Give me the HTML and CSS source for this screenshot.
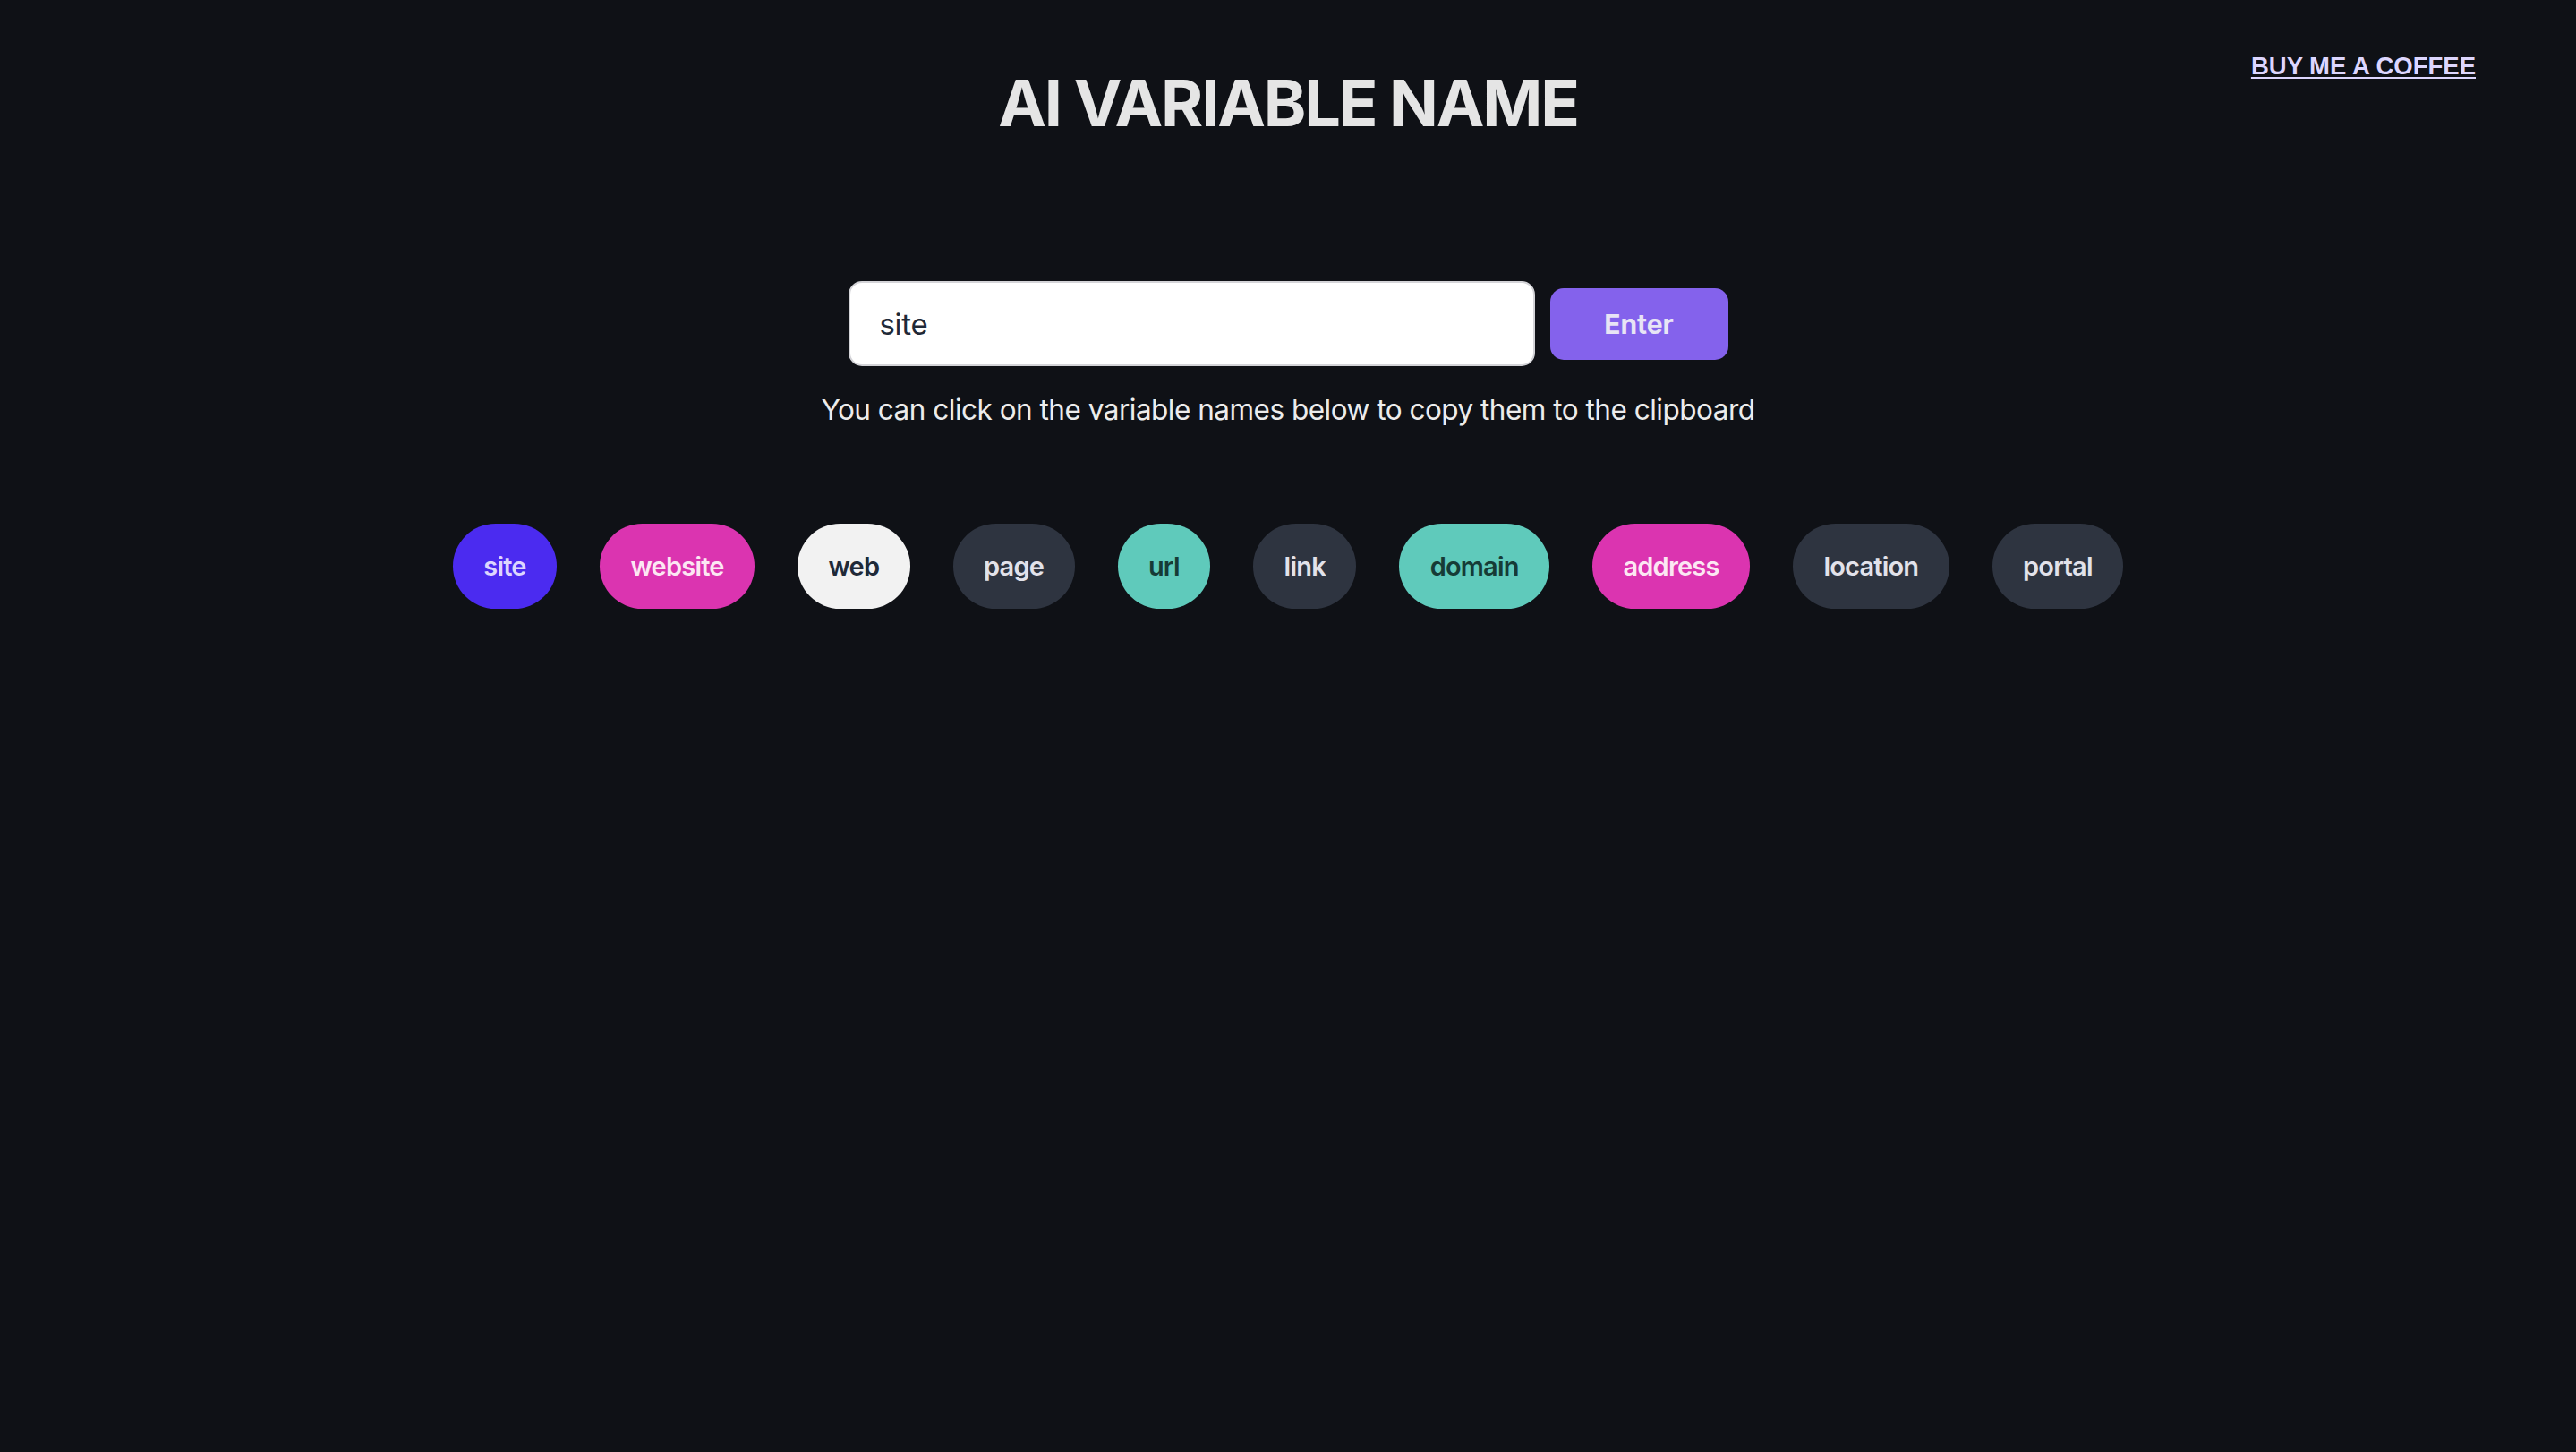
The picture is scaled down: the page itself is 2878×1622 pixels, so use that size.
FILE: index.html
```html
<!DOCTYPE html>
<html lang="en">
<head>
<meta charset="utf-8">
<title>AI Variable Name</title>
<link rel="stylesheet" href="styles.css">
</head>
<body>
<header class="header">
  <div class="header-side"></div>
  <h1 class="title">AI VARIABLE NAME</h1>
  <div class="header-side header-right">
    <a class="coffee-link" href="#">BUY ME A COFFEE</a>
  </div>
</header>
<main class="main">
  <form class="search" onsubmit="return false;">
    <input class="search-input" type="text" value="site">
    <button class="search-btn" type="submit">Enter</button>
  </form>
  <p class="hint">You can click on the variable names below to copy them to the clipboard</p>
  <ul class="names">
    <li class="pill pill-primary">site</li>
    <li class="pill pill-pink">website</li>
    <li class="pill pill-light">web</li>
    <li class="pill pill-dark">page</li>
    <li class="pill pill-teal">url</li>
    <li class="pill pill-dark">link</li>
    <li class="pill pill-teal">domain</li>
    <li class="pill pill-pink">address</li>
    <li class="pill pill-dark">location</li>
    <li class="pill pill-dark">portal</li>
  </ul>
</main>
</body>
</html>
```
FILE: styles.css
```css
html, body {
  margin: 0;
  padding: 0;
}
body {
  background: #0f1116;
  min-height: 100vh;
  font-family: Inter, "Noto Sans", sans-serif;
  color: #ececec;
}
.header {
  display: grid;
  grid-template-columns: 1fr auto 1fr;
  align-items: start;
  padding: 54px 112px 0 112px;
}
.title {
  margin: 25px 0 0 0;
  font-family: Inter, sans-serif;
  font-weight: 700;
  font-size: 72px;
  line-height: 72px;
  color: #e5e5e5;
  letter-spacing: -2.2px;
}
.header-right {
  display: flex;
  justify-content: flex-end;
}
.coffee-link {
  font-family: "Liberation Sans", Arial, sans-serif;
  font-weight: 700;
  font-size: 27.5px;
  line-height: 40px;
  color: #ddd6fe;
  text-decoration: underline;
  text-decoration-thickness: 2px;
  text-underline-offset: 3px;
}
.main {
  display: flex;
  flex-direction: column;
  align-items: center;
  padding-top: 163px;
}
.search {
  display: flex;
  align-items: center;
  gap: 17px;
  margin: 0;
}
.search-input {
  box-sizing: border-box;
  width: 767px;
  height: 95px;
  border: 2px solid #d4d4d8;
  border-radius: 15px;
  background: #ffffff;
  padding: 0 33px;
  font-family: Inter, sans-serif;
  font-size: 33px;
  letter-spacing: -0.3px;
  color: #1f2937;
  outline: none;
}
.search-btn {
  box-sizing: border-box;
  width: 199px;
  height: 80px;
  border: none;
  border-radius: 15px;
  background: #8462ec;
  color: #e8e4f5;
  font-family: Inter, sans-serif;
  font-weight: 700;
  font-size: 30px;
  cursor: pointer;
}
.hint {
  margin: 27px 0 0 0;
  font-size: 31.5px;
  line-height: 44px;
  letter-spacing: -0.5px;
  color: #ececec;
}
.names {
  list-style: none;
  margin: 105px 0 0 0;
  padding: 0;
  display: flex;
  gap: 48px;
}
.pill {
  display: flex;
  align-items: center;
  height: 95px;
  padding: 0 34.4px;
  border-radius: 48px;
  font-weight: 600;
  font-size: 29px;
  letter-spacing: -0.8px;
  cursor: pointer;
}
.pill-primary { background: #4b2bf0; color: #ddd6fe; }
.pill-pink { background: #db34b0; color: #fce7f3; }
.pill-light { background: #f2f2f2; color: #1f2937; }
.pill-dark { background: #2e3440; color: #e2e2ea; }
.pill-teal { background: #5fcabb; color: #163b36; }
```
